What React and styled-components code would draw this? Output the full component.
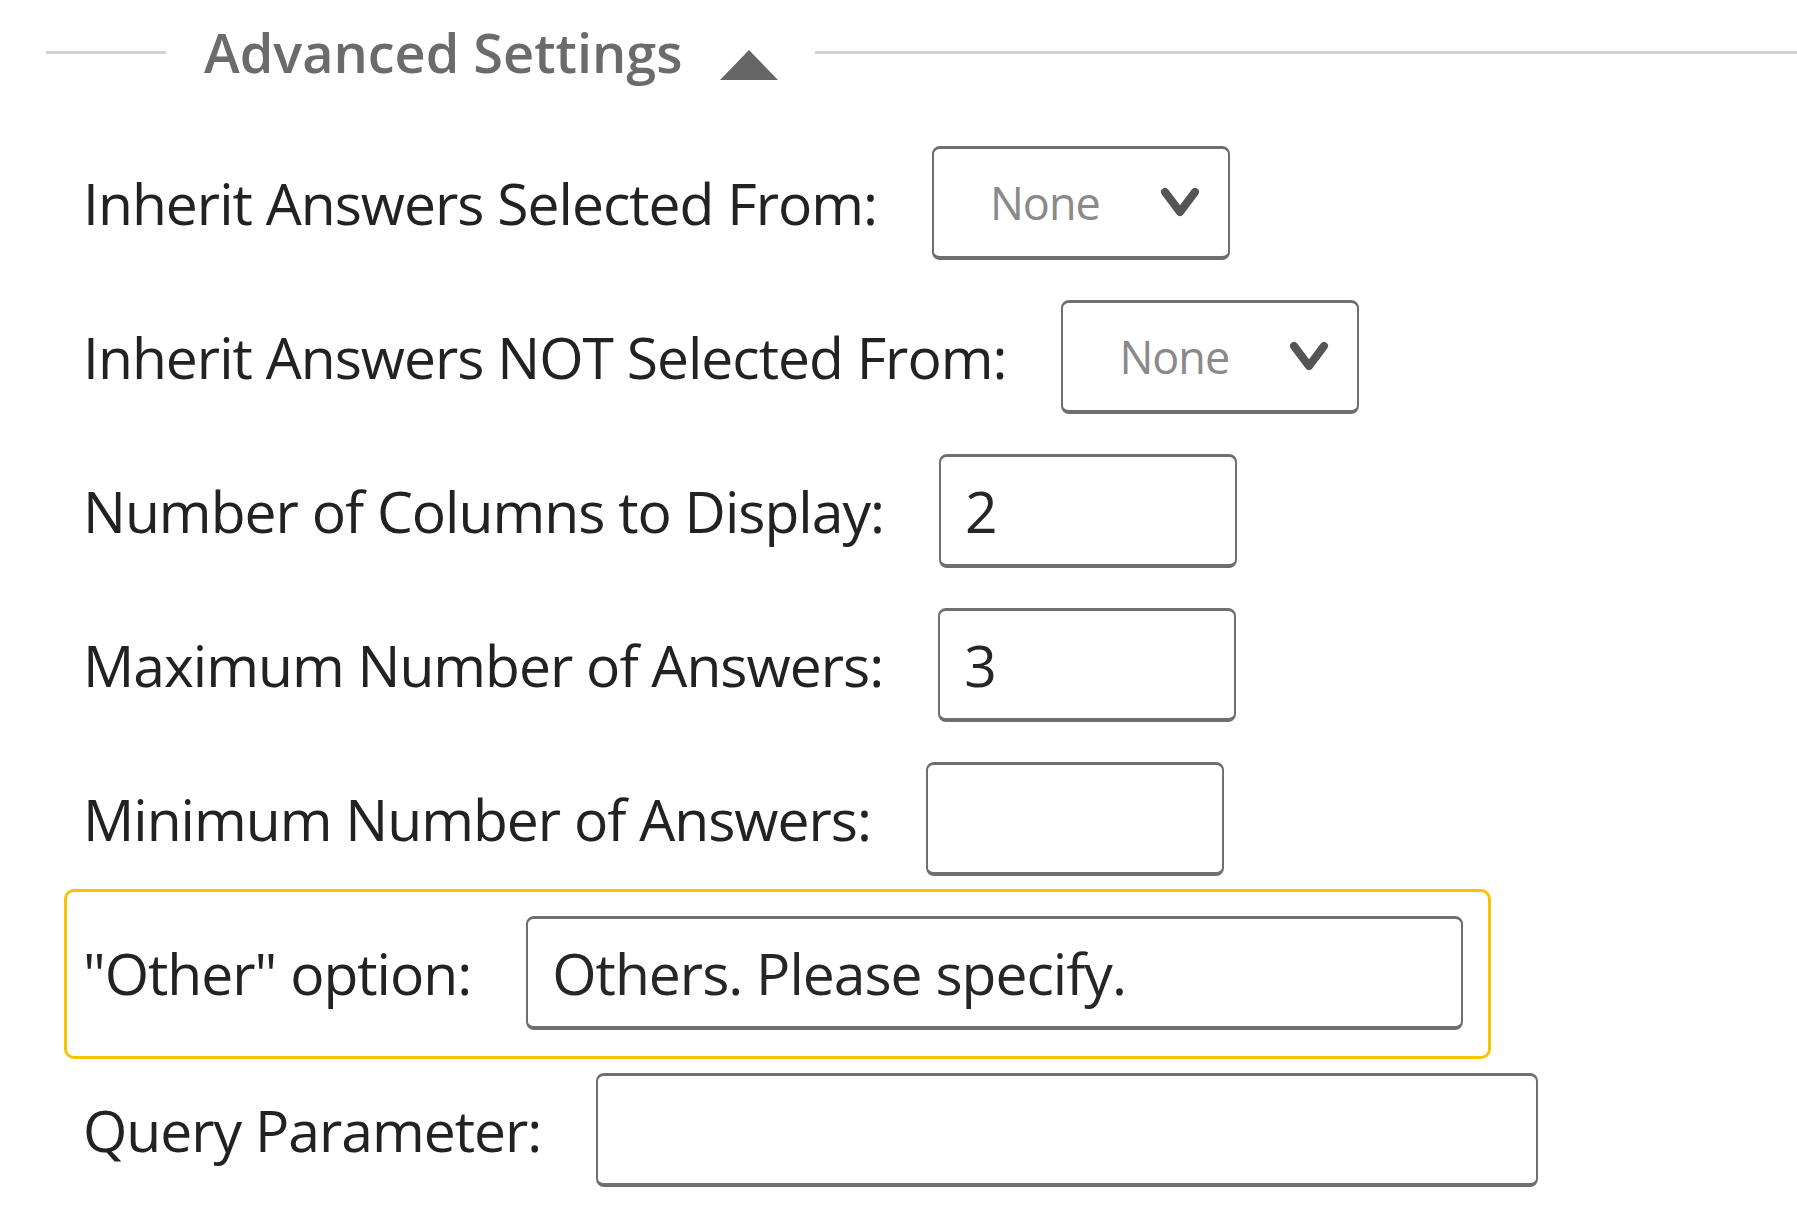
import React from 'react'
import styled, { createGlobalStyle } from 'styled-components'

const GlobalStyle = createGlobalStyle`
    body{
        margin: 0;
        background: #fff;
        font-family: "Open Sans", "Liberation Sans", sans-serif;
    }
`
const Page = styled.div`
    width: 1797px;
    min-height: 1228px;
    overflow: hidden;
`
const Header = styled.div`
    display: flex;
    align-items: center;
    height: 104px;
    padding-left: 46px;
`
const Rule = styled.div`
    height: 3px;
    background: #d2d2d2;
    width: ${p => p.$width ? p.$width + 'px' : 'auto'};
    flex: ${p => p.$grow ? 1 : 'none'};
`
const Title = styled.h2`
    margin: 0 38px;
    font-size: 54px;
    font-weight: 600;
    color: #6b6b6b;
    line-height: 1;
`
const Caret = styled.div`
    width: 0;
    height: 0;
    border-left: 29px solid transparent;
    border-right: 29px solid transparent;
    border-bottom: 30px solid #666;
    margin-right: 37px;
    margin-top: 26px;
`
const Form = styled.div`
    display: flex;
    flex-direction: column;
    align-items: flex-start;
    padding: 22px 0 0 64px;
`
const Row = styled.div`
    display: flex;
    align-items: center;
    gap: 55px;
    padding: ${p => p.$highlight ? '24px 25px 26px 16px' : '17px 25px 17px 16px'};
    margin: ${p => p.$highlight ? '-7px 0 -6px' : '0'};
    border: 3px solid ${p => p.$highlight ? '#f6c500' : 'transparent'};
    border-radius: 10px;
`
const Label = styled.label`
    font-size: 57px;
    letter-spacing: -1px;
    color: #222;
    white-space: nowrap;
`
const Field = styled.div`
    box-sizing: border-box;
    display: flex;
    align-items: center;
    width: ${p => p.$width}px;
    height: 114px;
    border: 2px solid #6f6f6f;
    border-top-width: 3px;
    border-bottom-width: 4px;
    border-radius: 8px;
    padding-left: 24px;
    font-size: 57px;
    letter-spacing: -1px;
    color: #262626;
    white-space: nowrap;
`
const Select = styled(Field)`
    justify-content: space-between;
    padding: 0 26px 0 56px;
    font-size: 45px;
    color: #8a8a8a;
`

function Chevron() {
  return (
    <svg width="44" height="34" viewBox="0 0 44 34">
      <polyline points="7,6 22,26 37,6" fill="none" stroke="#555" strokeWidth="8" strokeLinecap="round" strokeLinejoin="round" />
    </svg>
  )
}

export default function App() {
  return (
    <Page>
        <GlobalStyle />
        <Header>
            <Rule $width={120} />
            <Title>Advanced Settings</Title>
            <Caret />
            <Rule $grow />
        </Header>
        <Form>
            <Row>
                <Label>Inherit Answers Selected From:</Label>
                <Select $width={298}>None<Chevron /></Select>
            </Row>
            <Row>
                <Label>Inherit Answers NOT Selected From:</Label>
                <Select $width={298}>None<Chevron /></Select>
            </Row>
            <Row>
                <Label>Number of Columns to Display:</Label>
                <Field $width={298}>2</Field>
            </Row>
            <Row>
                <Label>Maximum Number of Answers:</Label>
                <Field $width={298}>3</Field>
            </Row>
            <Row>
                <Label>Minimum Number of Answers:</Label>
                <Field $width={298}></Field>
            </Row>
            <Row $highlight>
                <Label>"Other" option:</Label>
                <Field $width={937}>Others. Please specify.</Field>
            </Row>
            <Row>
                <Label>Query Parameter:</Label>
                <Field $width={942}></Field>
            </Row>
        </Form>
    </Page>
  )
}
